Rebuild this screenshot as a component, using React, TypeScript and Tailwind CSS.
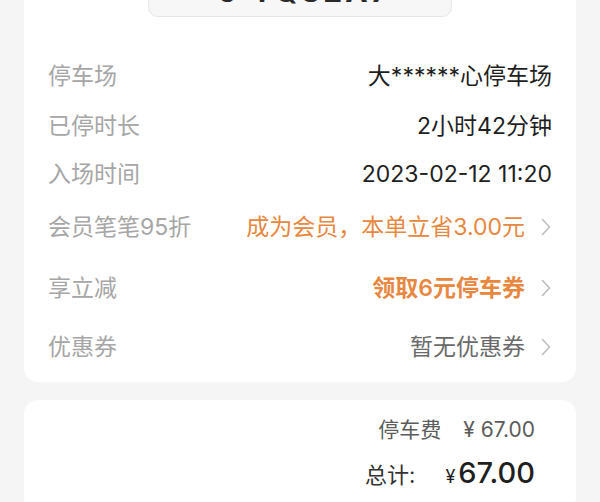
import type { FC } from "react";

const Chevron: FC = () => (
  <svg width="10" height="18" viewBox="0 0 10 18" className="ml-[16px] mr-[1px] shrink-0">
    <path d="M1.5 1.5 L8.5 9 L1.5 16.5" fill="none" stroke="#bdbdbd" strokeWidth="1.6" strokeLinecap="round" strokeLinejoin="round" />
  </svg>
);

type Row = {
  label: string;
  value: string;
  tone: "dark" | "orange" | "orangeBold" | "gray";
  arrow?: boolean;
  h: string;
};

const rows: Row[] = [
  { label: "停车场", value: "大******心停车场", tone: "dark", h: "h-[50px]" },
  { label: "已停时长", value: "2小时42分钟", tone: "dark", h: "h-[50px]" },
  { label: "入场时间", value: "2023-02-12 11:20", tone: "dark", h: "h-[46px]" },
  { label: "会员笔笔95折", value: "成为会员，本单立省3.00元", tone: "orange", arrow: true, h: "h-[60px]" },
  { label: "享立减", value: "领取6元停车券", tone: "orangeBold", arrow: true, h: "h-[62px]" },
  { label: "优惠券", value: "暂无优惠券", tone: "gray", arrow: true, h: "h-[56px]" },
];

const toneClass = {
  dark: "text-[#1f1f1f]",
  orange: "text-[#e8873f]",
  orangeBold: "text-[#e8873f] font-semibold",
  gray: "text-[#6a6a6a]",
};

export default function App() {
  return (
    <div
      className="h-[502px] w-[600px] overflow-hidden bg-[#f5f5f5] px-[24px]"
      style={{ fontFamily: 'Inter, "Noto Sans CJK SC", sans-serif' }}
    >
      {/* order info card */}
      <div className="mt-[-50px] rounded-[14px] bg-white px-[24px] pb-[7px]">
        <div className="mx-auto mt-[11px] flex h-[56px] w-[304px] items-end justify-center overflow-hidden rounded-[10px] border border-[#e6e6e6] bg-[#f7f7f7] pb-[10px] pl-[10px]">
          <span className="text-[30px] font-bold leading-none tracking-[3px] text-[#2a2a2a]">J·YQ32A7</span>
        </div>
        <div className="mt-[34px]">
          {rows.map((r) => (
            <div key={r.label} className={`flex items-center justify-between ${r.h}`}>
              <span className="text-[23px] text-[#a6a6a6]">{r.label}</span>
              <div className="flex items-center">
                <span className={`text-[23px] ${toneClass[r.tone]}`}>{r.value}</span>
                {r.arrow && <Chevron />}
              </div>
            </div>
          ))}
        </div>
      </div>

      {/* fee card */}
      <div className="mt-[18px] rounded-[14px] bg-white pr-[41px] pt-[14px] pb-[20px]">
        <div className="flex items-center justify-end text-[21px] text-[#5c5c5c]">
          <span>停车费</span>
          <span className="ml-[22px]">¥ 67.00</span>
        </div>
        <div className="mt-[12px] flex items-baseline justify-end text-[#1f1f1f]">
          <span className="text-[22px] text-[#333]">总计:</span>
          <span className="ml-[30px] text-[18px]">¥</span>
          <span className="ml-[3px] text-[29px] font-medium leading-none">67.00</span>
        </div>
      </div>
    </div>
  );
}
